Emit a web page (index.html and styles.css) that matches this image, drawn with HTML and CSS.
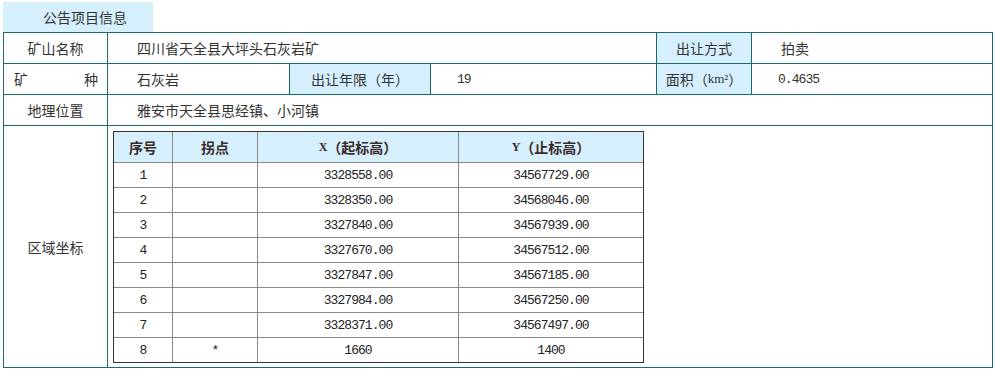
FILE: index.html
```html
<!DOCTYPE html>
<html lang="zh">
<head>
<meta charset="utf-8">
<title>公告项目信息</title>
<link rel="stylesheet" href="styles.css">
</head>
<body>
<div class="page">
  <div class="tab">公告项目信息</div>
  <div class="info">
    <div class="cell label">矿山名称</div>
    <div class="cell value span3">四川省天全县大坪头石灰岩矿</div>
    <div class="cell label blue">出让方式</div>
    <div class="cell value">拍卖</div>

    <div class="cell label justify"><span>矿</span><span>种</span></div>
    <div class="cell value">石灰岩</div>
    <div class="cell label blue">出让年限（年）</div>
    <div class="cell value num">19</div>
    <div class="cell label blue">面积（<span class="unit">km²</span>）</div>
    <div class="cell value num">0.4635</div>

    <div class="cell label">地理位置</div>
    <div class="cell value span5">雅安市天全县思经镇、小河镇</div>

    <div class="cell label">区域坐标</div>
    <div class="cell coords span5">
      <div class="grid">
        <div class="th">序号</div>
        <div class="th">拐点</div>
        <div class="th"><span class="mono">X</span>（起标高）</div>
        <div class="th"><span class="mono">Y</span>（止标高）</div>

        <div class="td">1</div><div class="td"></div><div class="td">3328558.00</div><div class="td">34567729.00</div>
        <div class="td">2</div><div class="td"></div><div class="td">3328350.00</div><div class="td">34568046.00</div>
        <div class="td">3</div><div class="td"></div><div class="td">3327840.00</div><div class="td">34567939.00</div>
        <div class="td">4</div><div class="td"></div><div class="td">3327670.00</div><div class="td">34567512.00</div>
        <div class="td">5</div><div class="td"></div><div class="td">3327847.00</div><div class="td">34567185.00</div>
        <div class="td">6</div><div class="td"></div><div class="td">3327984.00</div><div class="td">34567250.00</div>
        <div class="td">7</div><div class="td"></div><div class="td">3328371.00</div><div class="td">34567497.00</div>
        <div class="td">8</div><div class="td">*</div><div class="td">1660</div><div class="td">1400</div>
      </div>
    </div>
  </div>
</div>
</body>
</html>
```
FILE: styles.css
```css
html, body {
  margin: 0;
  padding: 0;
  background: #ffffff;
}
body {
  padding: 2px 0 0 3px;
  font-family: "Noto Sans CJK SC", "Liberation Sans", sans-serif;
  font-size: 14px;
  color: #333333;
}
.page {
  width: 990px;
}
.tab {
  box-sizing: border-box;
  width: 150px;
  height: 30px;
  line-height: 30px;
  padding-left: 14px;
  background: #d5f0fc;
  text-align: center;
  font-size: 14px;
  color: #333;
}
.info {
  display: grid;
  grid-template-columns: 103px 181px 140px 225px 94px 240px;
  grid-template-rows: 30px 30px 30px 241px;
  gap: 1px;
  padding: 1px;
  background: #1e6868;
}
.cell {
  background: #ffffff;
  display: flex;
  align-items: center;
  white-space: nowrap;
}
.label {
  justify-content: center;
}
.blue {
  background: #d5f0fc;
}
.justify {
  justify-content: space-between;
  padding: 0 9px 0 10px;
}
.value {
  padding-left: 29px;
}
.span3 { grid-column: span 3; }
.span5 { grid-column: span 5; }
.num {
  font-family: "Liberation Mono", "DejaVu Sans Mono", monospace;
  font-size: 13px;
  letter-spacing: -0.95px;
  padding-left: 26px;
}
.unit {
  font-family: "Liberation Serif", serif;
  font-size: 13px;
}
.coords {
  align-items: flex-start;
  padding: 5px 0 0 5px;
}
.grid {
  display: grid;
  grid-template-columns: 58px 84px 200px 184px;
  grid-template-rows: 30px repeat(8, 24px);
  gap: 1px;
  background: #888888;
  border: 1px solid #333333;
}
.th, .td {
  display: flex;
  align-items: center;
  justify-content: center;
}
.th {
  background: #d5f0fc;
  font-weight: bold;
  font-size: 14px;
  color: #3a2a2a;
}
.td {
  background: #ffffff;
  font-family: "Liberation Mono", "DejaVu Sans Mono", monospace;
  font-size: 13px;
  letter-spacing: -0.95px;
  color: #222;
}
.mono {
  font-family: "Liberation Serif", serif;
  font-size: 12px;
}
```
